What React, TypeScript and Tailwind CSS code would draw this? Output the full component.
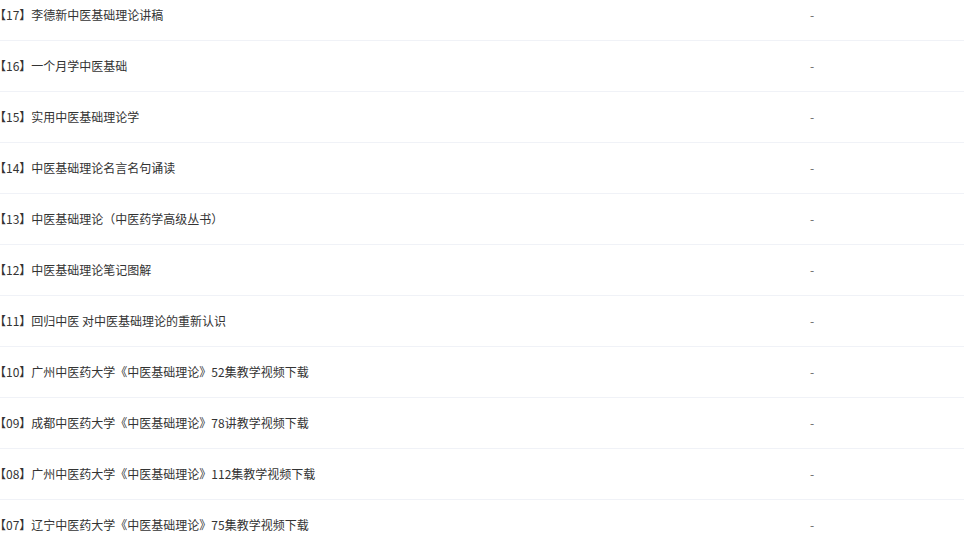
const rows = [
  "【17】李德新中医基础理论讲稿",
  "【16】一个月学中医基础",
  "【15】实用中医基础理论学",
  "【14】中医基础理论名言名句诵读",
  "【13】中医基础理论（中医药学高级丛书）",
  "【12】中医基础理论笔记图解",
  "【11】回归中医 对中医基础理论的重新认识",
  "【10】广州中医药大学《中医基础理论》52集教学视频下载",
  "【09】成都中医药大学《中医基础理论》78讲教学视频下载",
  "【08】广州中医药大学《中医基础理论》112集教学视频下载",
  "【07】辽宁中医药大学《中医基础理论》75集教学视频下载",
]

export default function App() {
  return (
    <div className="w-[964px] h-[539px] overflow-hidden bg-white">
      <ul
        className="mt-[-10px] text-[12px] text-[#333]"
        style={{ fontFamily: '"Microsoft YaHei", "Noto Sans CJK SC", sans-serif' }}
      >
        {rows.map((title) => (
          <li key={title} className="h-[51px] flex items-center border-b border-[#f0f2f7]">
            <span className="w-[810px] -ml-[6px] pl-0 truncate">{title}</span>
            <span className="text-[#666] ml-[6px]">-</span>
          </li>
        ))}
      </ul>
    </div>
  )
}
